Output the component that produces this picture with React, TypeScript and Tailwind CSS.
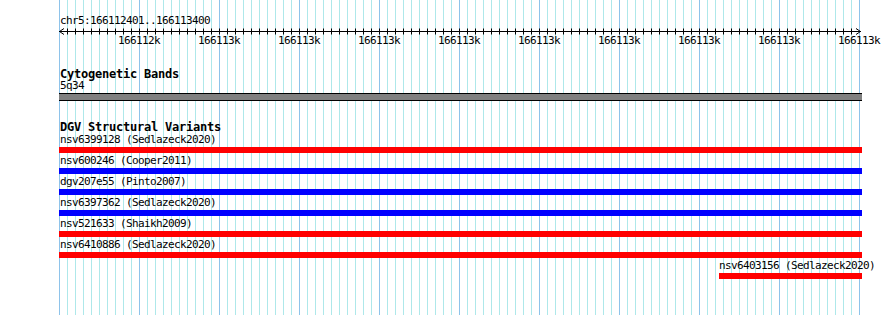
import React from 'react';

const GRID_X = Array.from({ length: 101 }, (_, i) => 59 + i * 8);
const LABEL_X = Array.from({ length: 10 }, (_, i) => 139 + i * 80);

interface Variant {
  name: string;
  study: string;
  color: 'red' | 'blue';
  partial?: boolean;
}

const variants: Variant[] = [
  { name: 'nsv6399128', study: 'Sedlazeck2020', color: 'red' },
  { name: 'nsv600246', study: 'Cooper2011', color: 'blue' },
  { name: 'dgv207e55', study: 'Pinto2007', color: 'blue' },
  { name: 'nsv6397362', study: 'Sedlazeck2020', color: 'blue' },
  { name: 'nsv521633', study: 'Shaikh2009', color: 'red' },
  { name: 'nsv6410886', study: 'Sedlazeck2020', color: 'red' },
  { name: 'nsv6403156', study: 'Sedlazeck2020', color: 'red', partial: true },
];

// background grid: minor line every 8px, major every 80px
function Grid() {
  return (
    <div className="absolute inset-0 flex items-stretch pl-[59px] gap-[7px]">
      {GRID_X.map((x, i) => (
        <div key={x} className={i % 10 === 0 ? 'w-px bg-[#8ec3ea]' : 'w-px bg-[#aee8ea]'} />
      ))}
    </div>
  );
}

function Ruler() {
  return (
    <svg width={890} height={20} className="block">
      <line x1={59} x2={861} y1={5.5} y2={5.5} stroke="#000" />
      <polyline points="64,2.5 59.5,5.5 64,8.5" fill="none" stroke="#000" />
      <polyline points="856,2.5 860.5,5.5 856,8.5" fill="none" stroke="#000" />
      {GRID_X.slice(1, 100).map((x) => (
        <line key={x} x1={x + 0.5} x2={x + 0.5} y1={2.5} y2={8.5} stroke="#000" />
      ))}
      {LABEL_X.map((x, i) => (
        <text
          key={x}
          x={x}
          y={18}
          textAnchor="middle"
          fontSize={11}
          letterSpacing={-0.62}
          fontFamily="'DejaVu Sans Mono', monospace"
          fill="#000"
        >
          {i === 0 ? '166112k' : '166113k'}
        </text>
      ))}
    </svg>
  );
}

export default function App() {
  return (
    <div className="relative w-[890px] h-[315px] overflow-hidden bg-white text-black font-['DejaVu_Sans_Mono',monospace]">
      <Grid />
      <div className="relative">
        <div className="pt-[16px] pl-[60px] text-[11px] tracking-[-0.62px] leading-[10px] h-[26px]">chr5:166112401..166113400</div>
        <Ruler />

        {/* Cytogenetic Bands */}
        <div className="mt-[22px] pl-[60px] text-[12px] tracking-[-0.22px] leading-[12px] h-[12px] font-bold">Cytogenetic Bands</div>
        <div className="mt-[1px] pl-[60px] text-[11px] tracking-[-0.62px] leading-[10px] h-[10px]">5q34</div>
        <div className="mt-[2px] ml-[59px] w-[803px] h-[8px] border-y border-black bg-[#808080]" />

        {/* DGV Structural Variants */}
        <div className="mt-[20px] pl-[60px] text-[12px] tracking-[-0.22px] leading-[12px] h-[12px] font-bold">DGV Structural Variants</div>
        <div className="mt-[2px] flex flex-col">
          {variants.map((v) => (
            <div key={v.name} className={v.partial ? 'h-[21px] ml-[719px]' : 'h-[21px] ml-[59px]'}>
              <div className={v.partial ? 'text-[11px] tracking-[-0.62px] leading-[10px] h-[10px] whitespace-nowrap' : 'pl-[1px] text-[11px] tracking-[-0.62px] leading-[10px] h-[10px] whitespace-nowrap'}>
                {v.name} ({v.study})
              </div>
              <div
                className={`mt-[2px] h-[6px] ${v.partial ? 'w-[143px]' : 'w-[803px]'} ${
                  v.color === 'red' ? 'bg-[#ff0000]' : 'bg-[#0000ff]'
                }`}
              />
            </div>
          ))}
        </div>
      </div>
    </div>
  );
}
